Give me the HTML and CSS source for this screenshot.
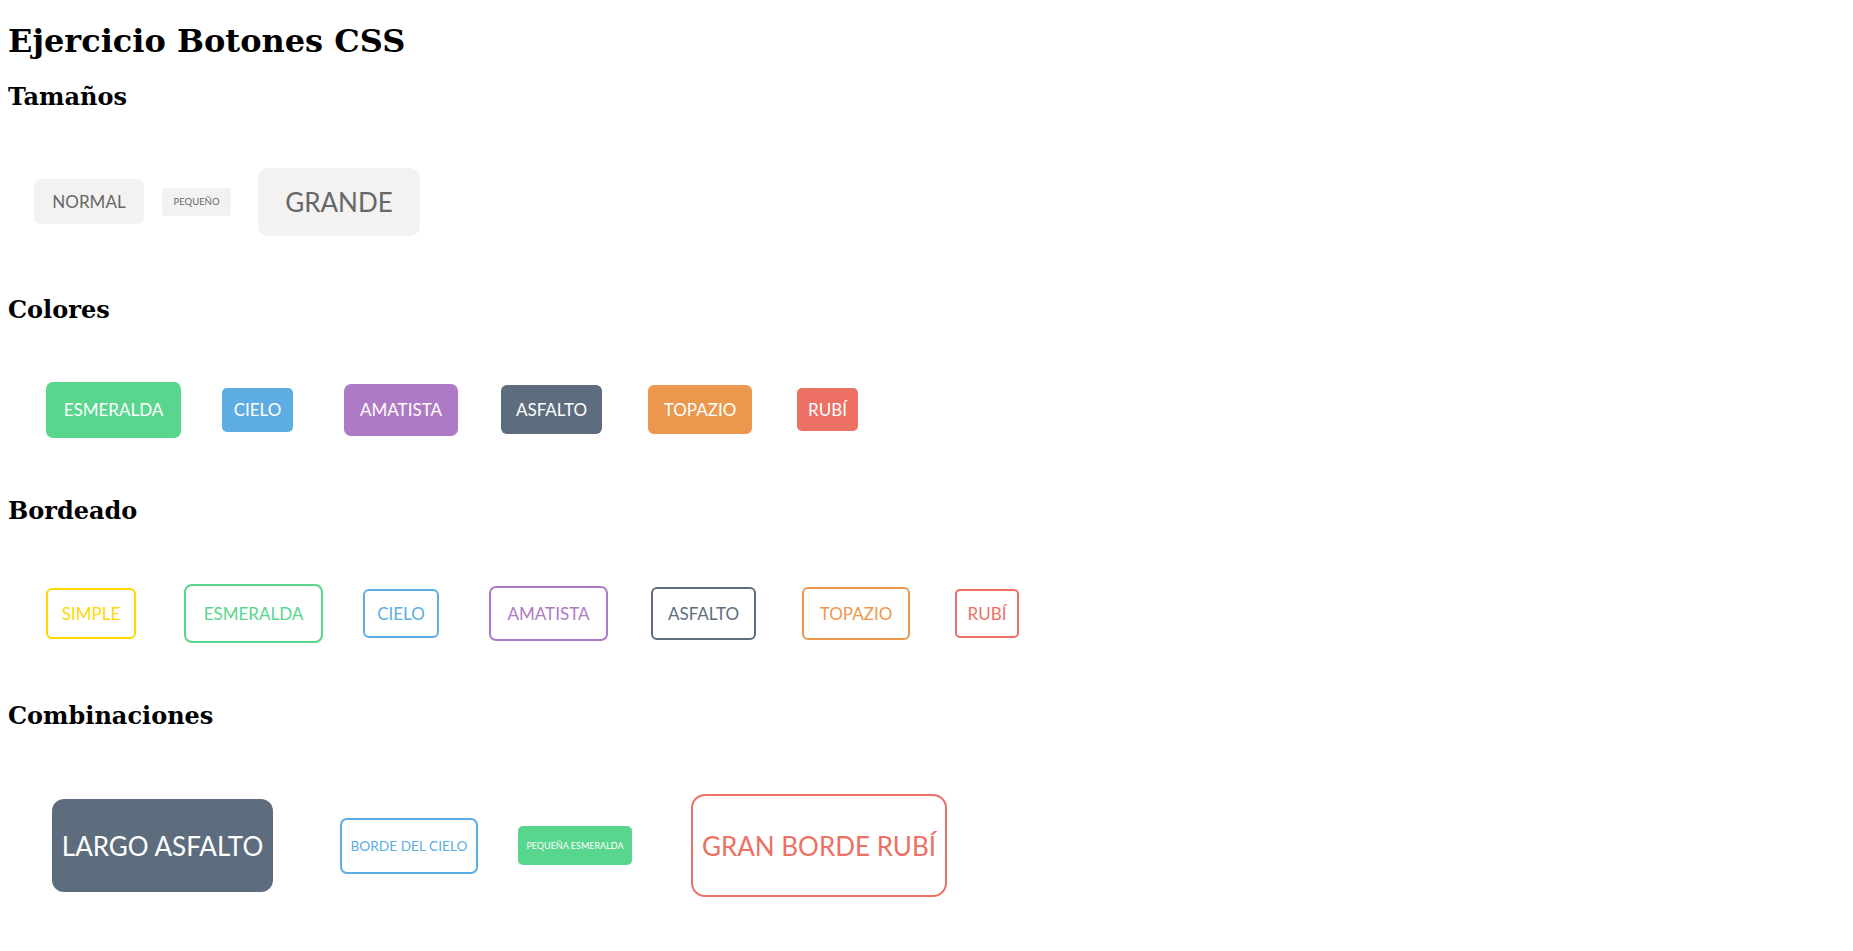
FILE: index.html
```html
<!DOCTYPE html>
<html lang="es">
<head>
<meta charset="utf-8">
<title>Ejercicio Botones CSS</title>
<link rel="stylesheet" href="styles.css">
</head>
<body>
<h1>Ejercicio Botones CSS</h1>

<h2>Tamaños</h2>
<div class="fila fila-tamanos">
  <a class="btn gris t-normal">NORMAL</a>
  <a class="btn gris t-pequeno">PEQUEÑO</a>
  <a class="btn gris t-grande">GRANDE</a>
</div>

<h2>Colores</h2>
<div class="fila fila-colores">
  <a class="btn esmeralda c-esmeralda">ESMERALDA</a>
  <a class="btn cielo c-cielo">CIELO</a>
  <a class="btn amatista c-amatista">AMATISTA</a>
  <a class="btn asfalto c-asfalto">ASFALTO</a>
  <a class="btn topazio c-topazio">TOPAZIO</a>
  <a class="btn rubi c-rubi">RUBÍ</a>
</div>

<h2>Bordeado</h2>
<div class="fila">
  <a class="btn borde b-simple">SIMPLE</a>
  <a class="btn borde borde-esmeralda b-esmeralda">ESMERALDA</a>
  <a class="btn borde borde-cielo b-cielo">CIELO</a>
  <a class="btn borde borde-amatista b-amatista">AMATISTA</a>
  <a class="btn borde borde-asfalto b-asfalto">ASFALTO</a>
  <a class="btn borde borde-topazio b-topazio">TOPAZIO</a>
  <a class="btn borde borde-rubi b-rubi">RUBÍ</a>
</div>

<h2>Combinaciones</h2>
<div class="fila fila-combo">
  <a class="btn asfalto k-largo">LARGO ASFALTO</a>
  <a class="btn borde borde-cielo k-borde">BORDE DEL CIELO</a>
  <a class="btn esmeralda k-pequena">PEQUEÑA ESMERALDA</a>
  <a class="btn borde borde-rubi k-gran">GRAN BORDE RUBÍ</a>
</div>
</body>
</html>
```

FILE: styles.css
```css
body {
  margin: 8px;
  font-family: "DejaVu Serif", serif;
  background: #ffffff;
  color: #000000;
}

h1 {
  font-size: 32px;
  margin: 13.5px 0 22.5px;
}

h2 {
  font-size: 24px;
  margin: 19.92px 0;
}

.fila {
  display: flex;
  align-items: center;
  padding: 39px 0;
}

.fila-tamanos {
  padding: 37px 0 39px;
}

.fila-colores {
  padding: 38px 0;
}

.fila-combo {
  padding: 44px 0;
}

.btn {
  box-sizing: border-box;
  display: flex;
  align-items: center;
  justify-content: center;
  flex: none;
  font-family: Lato, "Open Sans", sans-serif;
  font-size: 17px;
  white-space: nowrap;
  border-radius: 6px;
  color: #ffffff;
  cursor: pointer;
}

/* Tamaños */
.gris { background: #f3f2f1; color: #676767; }
.t-normal { width: 110px; height: 45px; margin-left: 26px; border-radius: 7px; }
.t-pequeno { width: 69px; height: 28px; margin-left: 18px; font-size: 9.5px; border-radius: 4px; }
.t-grande { width: 162px; height: 68px; margin-left: 27px; font-size: 26px; border-radius: 10px; }

/* Colores */
.esmeralda { background: #58d68d; }
.cielo { background: #5dade2; }
.amatista { background: #af7ac5; }
.asfalto { background: #5d6d7e; }
.topazio { background: #eb984e; }
.rubi { background: #ec7063; }

.c-esmeralda { width: 135px; height: 56px; margin-left: 38px; border-radius: 7px; }
.c-cielo { width: 71px; height: 44px; margin-left: 41px; border-radius: 5px; }
.c-amatista { width: 114px; height: 52px; margin-left: 51px; border-radius: 7px; }
.c-asfalto { width: 101px; height: 49px; margin-left: 43px; }
.c-topazio { width: 104px; height: 49px; margin-left: 46px; }
.c-rubi { width: 61px; height: 43px; margin-left: 45px; border-radius: 5px; }

/* Bordeado */
.borde { background: #ffffff; border: 2px solid #ffd700; color: #ffd700; }
.borde-esmeralda { border-color: #58d68d; color: #58d68d; }
.borde-cielo { border-color: #5dade2; color: #5dade2; }
.borde-amatista { border-color: #af7ac5; color: #af7ac5; }
.borde-asfalto { border-color: #5d6d7e; color: #5d6d7e; }
.borde-topazio { border-color: #eb984e; color: #eb984e; }
.borde-rubi { border-color: #ec7063; color: #ec7063; }

.b-simple { width: 90px; height: 51px; margin-left: 38px; }
.b-esmeralda { width: 139px; height: 59px; margin-left: 48px; border-radius: 8px; }
.b-cielo { width: 76px; height: 49px; margin-left: 40px; }
.b-amatista { width: 119px; height: 55px; margin-left: 50px; border-radius: 7px; }
.b-asfalto { width: 105px; height: 53px; margin-left: 43px; }
.b-topazio { width: 108px; height: 53px; margin-left: 46px; }
.b-rubi { width: 64px; height: 49px; margin-left: 45px; border-radius: 5px; }

/* Combinaciones */
.k-largo { width: 221px; height: 93px; margin-left: 44px; font-size: 26px; border-radius: 12px; }
.k-borde { width: 138px; height: 56px; margin-left: 67px; font-size: 13.7px; border-radius: 7px; }
.k-pequena { width: 114px; height: 39px; margin-left: 40px; font-size: 9px; border-radius: 5px; }
.k-gran { width: 256px; height: 103px; margin-left: 59px; font-size: 26px; border-radius: 14px; }
```
